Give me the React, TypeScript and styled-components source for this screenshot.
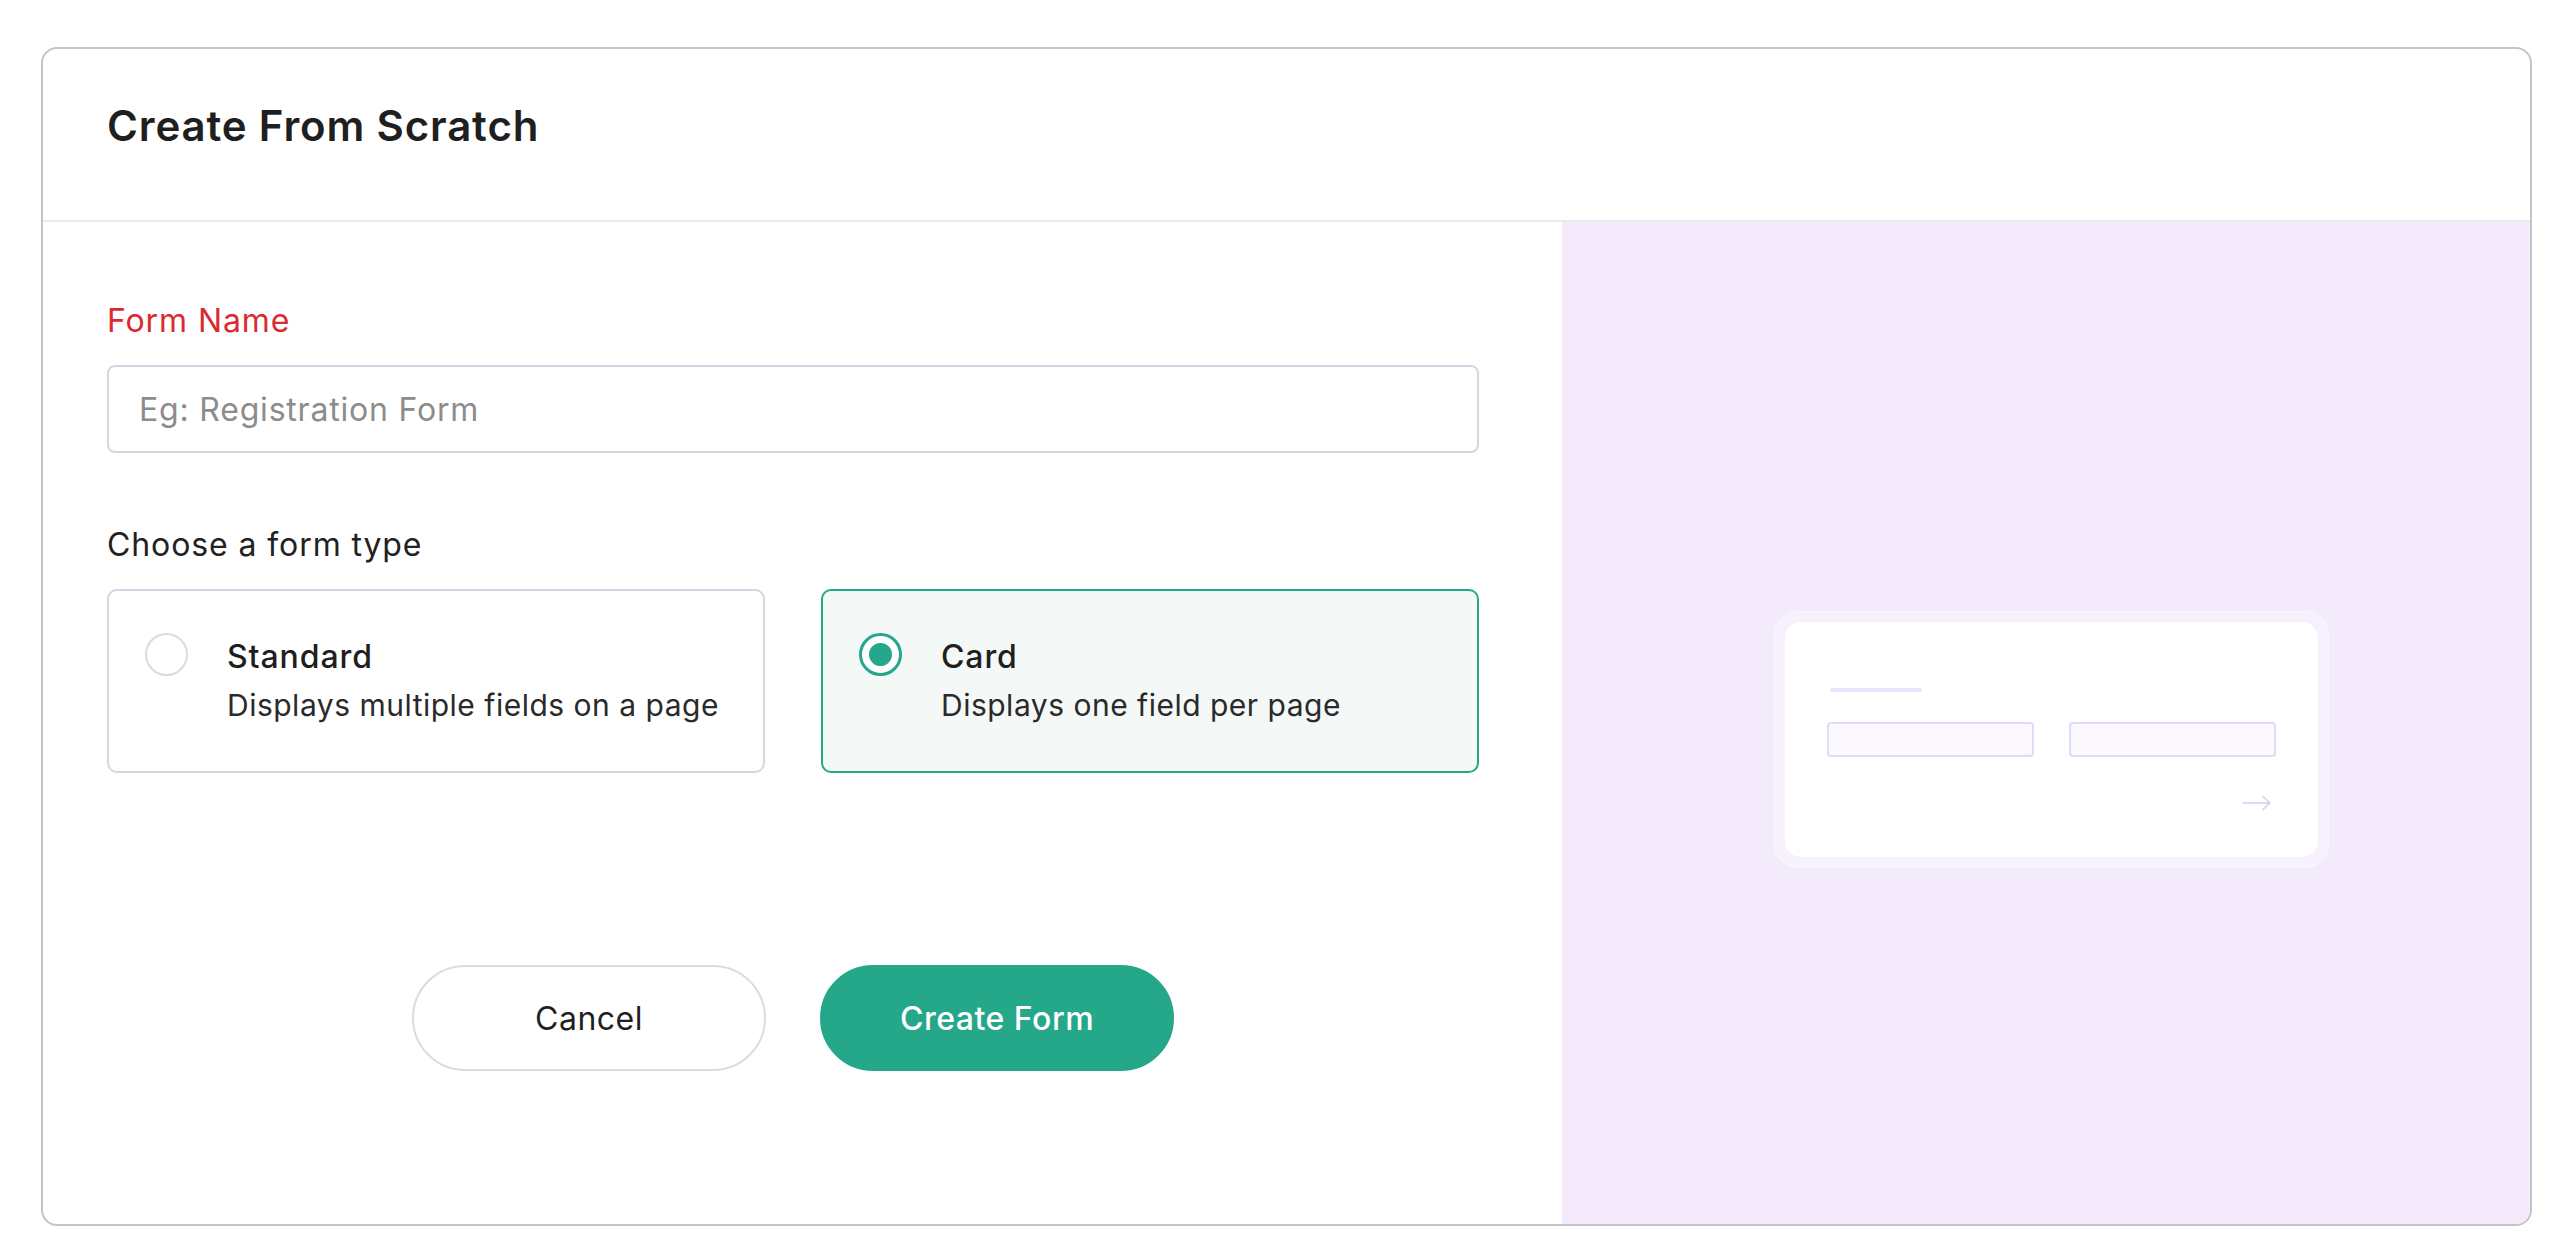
import { useState } from 'react';
import styled, { createGlobalStyle } from 'styled-components';

const GlobalStyle = createGlobalStyle`
  html, body {
    margin: 0;
    padding: 0;
    background: #ffffff;
    font-family: Inter, 'Noto Sans', 'Liberation Sans', sans-serif;
    color: #222222;
  }
  * {
    box-sizing: border-box;
  }
`;

const Page = styled.div`
  padding: 47px 41px 34px 41px;
`;

const Modal = styled.div`
  height: 1179px;
  border: 2px solid #c4c4c4;
  border-radius: 16px;
  overflow: hidden;
  display: flex;
  flex-direction: column;
  background: #ffffff;
`;

const Header = styled.div`
  height: 173px;
  padding: 47px 64px 0;
  border-bottom: 2px solid #ebebeb;
`;

const Title = styled.h1`
  margin: 0;
  font-size: 42px;
  line-height: 60px;
  font-weight: 600;
  letter-spacing: 0.85px;
  color: #1f1f1f;
`;

const Body = styled.div`
  flex: 1;
  display: grid;
  grid-template-columns: 1519px 1fr;
`;

const FormPane = styled.div`
  padding: 75px 83px 0 64px;
  display: flex;
  flex-direction: column;
`;

const FieldLabel = styled.label<{ $required?: boolean }>`
  font-size: 32px;
  line-height: 48px;
  letter-spacing: 0.9px;
  color: ${({ $required }) => ($required ? '#d92b2f' : '#222222')};
`;

const TextInput = styled.input`
  margin-top: 20px;
  height: 88px;
  width: 100%;
  padding: 0 30px;
  border: 2px solid #cfd9e4;
  border-radius: 8px;
  font-family: inherit;
  font-size: 32px;
  letter-spacing: 0.8px;
  color: #222222;
  outline: none;

  &::placeholder {
    color: #8c8c8c;
  }
`;

const SectionLabel = styled.div`
  margin-top: 68px;
  font-size: 32px;
  line-height: 48px;
  letter-spacing: 0.9px;
  color: #222222;
`;

const OptionGrid = styled.div`
  margin-top: 20px;
  display: grid;
  grid-template-columns: 1fr 1fr;
  gap: 56px;
`;

const Option = styled.div<{ $active: boolean }>`
  display: flex;
  align-items: flex-start;
  gap: 39px;
  height: 184px;
  padding: 42px 36px;
  border: 2px solid ${({ $active }) => ($active ? '#25a78a' : '#cfd9e4')};
  border-radius: 10px;
  background: ${({ $active }) => ($active ? '#f4f8f7' : '#ffffff')};
  cursor: pointer;
`;

const Radio = styled.span<{ $checked: boolean }>`
  flex: none;
  width: 43px;
  height: 43px;
  border-radius: 50%;
  border: ${({ $checked }) => ($checked ? '3px solid #25a78a' : '2px solid #d3dde6')};
  background: #ffffff;
  display: flex;
  align-items: center;
  justify-content: center;

  &::after {
    content: '';
    display: ${({ $checked }) => ($checked ? 'block' : 'none')};
    width: 23px;
    height: 23px;
    border-radius: 50%;
    background: #25a78a;
  }
`;

const OptionText = styled.div`
  display: flex;
  flex-direction: column;
`;

const OptionTitle = styled.div`
  font-size: 32px;
  line-height: 48px;
  font-weight: 500;
  letter-spacing: 0.9px;
  color: #1f1f1f;
`;

const OptionDesc = styled.div`
  font-size: 30px;
  line-height: 48px;
  letter-spacing: 0.5px;
  color: #2a2a2a;
`;

const Actions = styled.div`
  margin-top: 192px;
  display: flex;
  justify-content: center;
  gap: 54px;
`;

const Button = styled.button<{ $primary?: boolean }>`
  width: 354px;
  height: 106px;
  border-radius: 53px;
  font-family: inherit;
  font-size: 32px;
  letter-spacing: 0.5px;
  font-weight: ${({ $primary }) => ($primary ? 500 : 400)};
  cursor: pointer;
  border: 2px solid ${({ $primary }) => ($primary ? '#25a78a' : '#d5dee4')};
  background: ${({ $primary }) => ($primary ? '#25a78a' : '#ffffff')};
  color: ${({ $primary }) => ($primary ? '#ffffff' : '#1f1f1f')};
`;

const PreviewPane = styled.div`
  background: #f3ebfc;
  display: flex;
  align-items: center;
  justify-content: center;
  padding: 32px 0 0 10px;
`;

const PreviewFrame = styled.div`
  width: 555px;
  height: 257px;
  padding: 9px;
  border: 2px solid #f8f4fe;
  border-radius: 24px;
  background: #f6f1fd;
`;

const PreviewCard = styled.div`
  height: 100%;
  background: #ffffff;
  border-radius: 16px;
  padding: 66px 42px 44px 42px;
  display: flex;
  flex-direction: column;
`;

const PreviewLine = styled.div`
  width: 92px;
  height: 4px;
  margin-left: 3px;
  border-radius: 2px;
  background: #ece3fa;
`;

const PreviewFields = styled.div`
  margin-top: 30px;
  display: grid;
  grid-template-columns: 1fr 1fr;
  gap: 35px;
`;

const PreviewField = styled.div`
  height: 35px;
  border: 2px solid #e3d9f8;
  border-radius: 4px;
  background: #fbf9fe;
`;

const PreviewNext = styled.div`
  margin-top: 38px;
  margin-right: 4px;
  display: flex;
  justify-content: flex-end;
`;

const ArrowIcon = () => (
  <svg width="30" height="16" viewBox="0 0 30 16" fill="none">
    <path
      d="M1 8h27M21 1.5l7 6.5-7 6.5"
      stroke="#d9ccf5"
      strokeWidth="1.6"
      strokeLinecap="round"
      strokeLinejoin="round"
    />
  </svg>
);

const formTypes = [
  { id: 'standard', title: 'Standard', desc: 'Displays multiple fields on a page' },
  { id: 'card', title: 'Card', desc: 'Displays one field per page' },
];

export default function App() {
  const [type, setType] = useState('card');

  return (
    <Page>
      <GlobalStyle />
      <Modal>
        <Header>
          <Title>Create From Scratch</Title>
        </Header>
        <Body>
          <FormPane>
            <FieldLabel $required htmlFor="form-name">
              Form Name
            </FieldLabel>
            <TextInput id="form-name" placeholder="Eg: Registration Form" />
            <SectionLabel>Choose a form type</SectionLabel>
            <OptionGrid>
              {formTypes.map((t) => (
                <Option key={t.id} $active={type === t.id} onClick={() => setType(t.id)}>
                  <Radio $checked={type === t.id} />
                  <OptionText>
                    <OptionTitle>{t.title}</OptionTitle>
                    <OptionDesc>{t.desc}</OptionDesc>
                  </OptionText>
                </Option>
              ))}
            </OptionGrid>
            <Actions>
              <Button>Cancel</Button>
              <Button $primary>Create Form</Button>
            </Actions>
          </FormPane>
          <PreviewPane>
            <PreviewFrame>
              <PreviewCard>
                <PreviewLine />
                <PreviewFields>
                  <PreviewField />
                  <PreviewField />
                </PreviewFields>
                <PreviewNext>
                  <ArrowIcon />
                </PreviewNext>
              </PreviewCard>
            </PreviewFrame>
          </PreviewPane>
        </Body>
      </Modal>
    </Page>
  );
}
